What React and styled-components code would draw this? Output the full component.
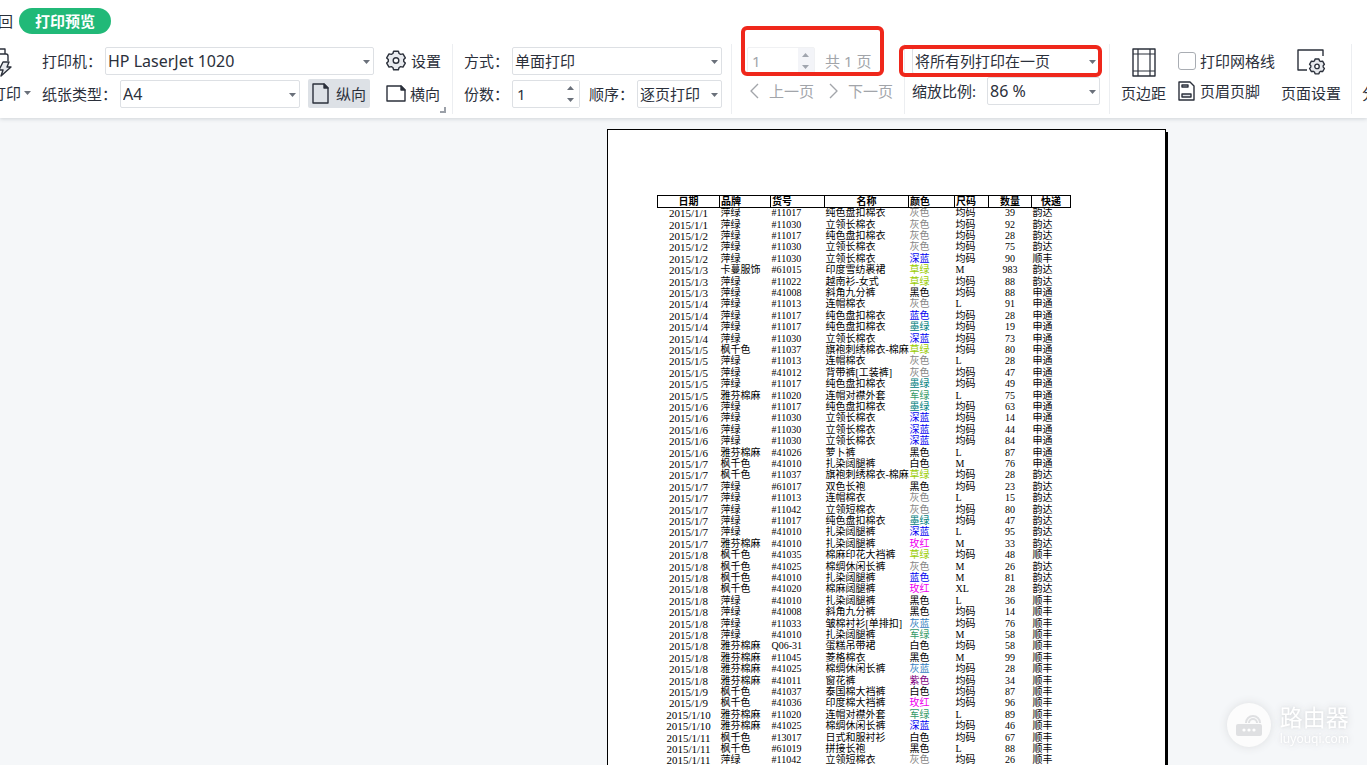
import React, { useState } from 'react';
import styled, { createGlobalStyle } from 'styled-components';

const GlobalStyle = createGlobalStyle`
  * {
    box-sizing: border-box;
  }

  body {
    margin: 0;
    overflow: hidden;
    background: #f5f7f9;
    color: #2b303b;
    font-family: 'Noto Sans', 'Noto Sans CJK SC', sans-serif;
    font-size: 15px;
    line-height: 20px;
  }

  button, input, select {
    font: inherit;
    color: inherit;
  }
`;

const Screen = styled.div`
  display: flex;
  flex-direction: column;
  height: 100vh;
  overflow: hidden;
`;

const Header = styled.header`
  position: relative;
  flex: none;
  background: #fff;
  box-shadow: 0 1px 4px rgba(60, 70, 85, 0.2);
`;

const Tabs = styled.nav`
  display: flex;
  align-items: center;
  gap: 6px;
  height: 42px;
  margin-left: -17px;
`;

const BackButton = styled.button`
  padding: 0;
  border: 0;
  background: none;
`;

const ActiveTab = styled.button`
  height: 26px;
  padding: 0 16px;
  border: 0;
  border-radius: 13px;
  background: #21b978;
  color: #fff;
  font-weight: 700;
  line-height: 26px;
  white-space: nowrap;
`;

const Ribbon = styled.div`
  display: flex;
  height: 76px;
  padding: 2px 0 4px;
  margin-left: -9px;
  white-space: nowrap;
`;

const Group = styled.section`
  position: relative;
  display: flex;
  flex: none;
  gap: ${(props) => props.$gap || '0'};
  padding: ${(props) => props.$padding || '0 10px'};
  border-right: 1px solid #eceef1;
`;

const Rows = styled.div`
  display: flex;
  flex-direction: column;
  gap: ${(props) => props.$gap || '4px'};
  padding: ${(props) => props.$padding || '2px 0 0'};
`;

const Row = styled.div`
  position: relative;
  display: flex;
  align-items: center;
  gap: ${(props) => props.$gap || '0'};
  height: 29px;
`;

const Label = styled.label`
  flex: none;
  width: ${(props) => props.$width || 'auto'};
`;

const PageTotal = styled.span`
  color: #a2a5aa;
`;

const Field = styled.span`
  position: relative;
  display: block;
  width: ${(props) => props.$width};
  height: ${(props) => props.$height || '28px'};
  margin-right: ${(props) => props.$after || '0'};
  font-size: ${(props) => props.$size || '15px'};

  select, input {
    display: block;
    width: 100%;
    height: 100%;
    margin: 0;
    padding: 0 2px;
    border: 1px solid #dde0e4;
    border-radius: 2px;
    background: #fff;
    appearance: none;
    outline: none;
  }

  input {
    padding: 0 4px;
  }

  input:disabled {
    border-color: #f0f1f3;
    color: #a2a5aa;
    opacity: 1;
  }
`;

const CaretSvg = styled.svg`
  position: absolute;
  top: 50%;
  right: 4px;
  margin-top: -1px;
  fill: #6a707a;
  pointer-events: none;
`;

const Spinner = styled.span`
  position: absolute;
  top: 1px;
  right: 1px;
  bottom: 1px;
  display: flex;
  flex-direction: column;
  justify-content: space-between;
  width: 16px;
  padding: 5px 4px;
  background: ${(props) => (props.$muted ? '#f3f4f8' : '#fff')};

  svg {
    fill: ${(props) => (props.$muted ? '#a0a5ae' : '#6a707a')};
  }
`;

const RedFrame = styled.span`
  position: absolute;
  inset: ${(props) => props.$inset};
  border: 4px solid #ef271b;
  border-radius: 6px;
  pointer-events: none;
`;

const ToolButton = styled.button`
  display: flex;
  align-items: center;
  gap: ${(props) => props.$gap || '5px'};
  height: 29px;
  padding: ${(props) => props.$padding || '0'};
  border: 0;
  border-radius: 2px;
  background: ${(props) => (props.$active ? '#dde1e6' : 'none')};

  &:disabled {
    color: #a2a5aa;
  }
`;

const TallButton = styled.button`
  display: flex;
  flex-direction: column;
  align-items: ${(props) => props.$align || 'center'};
  justify-content: space-between;
  height: 61px;
  padding: 4px 0 2px;
  border: 0;
  background: none;
`;

const PrintText = styled.span`
  display: flex;
  align-items: center;
  gap: 3px;
`;

const Checkbox = styled.input`
  width: 18px;
  height: 18px;
  margin: 0;
  border: 1px solid #a9adb3;
  border-radius: 3px;
  background: #fff;
  appearance: none;
`;

const Corner = styled.span`
  position: absolute;
  right: 6px;
  bottom: 1px;
  width: 6px;
  height: 6px;
  border: solid #9ba0a8;
  border-width: 0 2px 2px 0;
`;

const Workspace = styled.main`
  flex: 1;
  min-height: 0;
  padding: 11px 201px 0 0;
  overflow: hidden;
`;

const Paper = styled.article`
  width: 559px;
  min-height: 800px;
  margin-left: auto;
  padding: 65px 0 0 49px;
  border: 1px solid #000;
  background: #fff;
  box-shadow: 2px 3px 0 #000;
`;

const Sheet = styled.table`
  width: 413px;
  table-layout: fixed;
  border-collapse: collapse;
  color: #000;
  font-family: 'Liberation Serif', 'Noto Sans CJK SC', serif;
  font-size: 10px;
  line-height: 10px;

  th {
    height: 12px;
    padding: 0 1px;
    border: 1px solid #000;
    font-weight: 700;
  }

  td {
    height: 11px;
    padding: 0 1px;
    vertical-align: top;
    white-space: nowrap;
  }

  tr:nth-child(5n + 1) td,
  tr:nth-child(5n + 4) td {
    height: 12px;
  }
`;

const HeadCell = styled.th`
  text-align: ${(props) => props.$align};
`;

const Cell = styled.td`
  color: ${(props) => props.$color || '#000'};
  font-size: ${(props) => props.$size || '10px'};
  text-align: ${(props) => props.$align || 'left'};
`;

const Watermark = styled.aside`
  position: fixed;
  right: 18px;
  bottom: 18px;
  display: flex;
  align-items: center;
  gap: 9px;
  color: #fff;
  text-shadow: 0 0 8px #d3d5d8, 0 0 3px #dcdee0;
`;

const Badge = styled.span`
  display: grid;
  place-items: center;
  width: 44px;
  height: 44px;
  border-radius: 50%;
  background: #fcfcfc;
  box-shadow: 0 0 10px #dcdee0;
`;

const BrandName = styled.div`
  font-size: 23px;
  line-height: 28px;
`;

const BrandUrl = styled.div`
  font-size: 12px;
  line-height: 16px;
`;

const Caret = () => (
  <CaretSvg width="7" height="4" viewBox="0 0 7 4" aria-hidden="true">
    <path d="M0 0h7L3.5 4z" />
  </CaretSvg>
);

const Steps = ({ muted }) => (
  <Spinner $muted={muted} aria-hidden="true">
    <svg width="7" height="4" viewBox="0 0 7 4"><path d="M0 4h7L3.5 0z" /></svg>
    <svg width="7" height="4" viewBox="0 0 7 4"><path d="M0 0h7L3.5 4z" /></svg>
  </Spinner>
);

const Icon = ({ width, height, children }) => (
  <svg
    width={width}
    height={height}
    viewBox={`0 0 ${width} ${height}`}
    fill="none"
    stroke="currentColor"
    strokeWidth="1.4"
    strokeLinejoin="round"
    aria-hidden="true"
  >
    {children}
  </svg>
);

const GEAR =
  'M7.6 1.2h4.8l.7 2.3 1.6.9 2.3-.5 2.3 4-1.6 1.7v1.8l1.6 1.7-2.3 4-2.3-.5-1.6.9-.7 2.3H7.6l-.7-2.3-1.6-.9-2.3.5-2.3-4 1.6-1.7V9.6L.7 7.9l2.3-4 2.3.5 1.6-.9z';

const GearIcon = () => (
  <Icon width={20} height={21}>
    <path d={GEAR} fill="#e8eaee" />
    <circle cx="10" cy="10.5" r="2.8" fill="#fff" />
  </Icon>
);

const PrintIcon = () => (
  <Icon width={22} height={30}>
    <path d="M4 6V1h10v5M2 22V8q0-2 2-2h11q2 0 2 2v5" />
    <path d="M12 14h6l-2 5h4L10 28l2-6H8z" fill="#e8eaee" />
  </Icon>
);

const PortraitIcon = () => (
  <Icon width={17} height={21}>
    <path d="M1 1h11l4 4v15H1z" />
    <path d="M12 1v4h4z" fill="currentColor" />
  </Icon>
);

const LandscapeIcon = () => (
  <Icon width={20} height={17}>
    <path d="M1 1h14l4 4v11H1z" />
    <path d="M15 1v4h4z" fill="currentColor" />
  </Icon>
);

const MarginIcon = () => (
  <Icon width={24} height={29}>
    <path d="M1 1h22v27H1z" />
    <path d="M6 1v27M18 1v27M1 6h22M1 23h22" strokeWidth="1.2" />
  </Icon>
);

const HeaderFooterIcon = () => (
  <Icon width={17} height={20}>
    <path d="M1 1h11l4 4v14H1z" />
    <path d="M4 4h6v2H4zM4 13h9v3H4z" fill="#e0e3e8" />
  </Icon>
);

const PageSetupIcon = () => (
  <Icon width={30} height={27}>
    <path d="M11 22H2V2h25v6" />
    <g transform="translate(13 10) scale(.8)">
      <path d={GEAR} fill="#e8eaee" strokeWidth="1.7" />
      <circle cx="10" cy="10.5" r="2.8" fill="#fff" strokeWidth="1.7" />
    </g>
  </Icon>
);

const Arrow = ({ d }) => (
  <Icon width={9} height={16}>
    <path d={d} />
  </Icon>
);

const Select = ({ id, width, height, size, after, value, label }) => (
  <Field $width={width} $height={height} $size={size} $after={after}>
    <select id={id} defaultValue={value} aria-label={label}>
      <option>{value}</option>
    </select>
    <Caret />
  </Field>
);

const columns = [
  ['日期', 62, 'center'],
  ['品牌', 51, 'left'],
  ['货号', 54, 'left'],
  ['名称', 84, 'center'],
  ['颜色', 46, 'left'],
  ['尺码', 34, 'left'],
  ['数量', 43, 'center'],
  ['快递', 39, 'center'],
];

const colors = {
  灰色: '#858585',
  深蓝: '#0000f0',
  蓝色: '#0000f0',
  草绿: '#99cc00',
  墨绿: '#008080',
  军绿: '#339966',
  玫红: '#f000f0',
  灰蓝: '#3380c0',
  紫色: '#800080',
};

const orders = `
1/1 萍绿 #11017 纯色盘扣棉衣 灰色 均码 39 韵达
1/1 萍绿 #11030 立领长棉衣 灰色 均码 92 韵达
1/2 萍绿 #11017 纯色盘扣棉衣 灰色 均码 28 韵达
1/2 萍绿 #11030 立领长棉衣 灰色 均码 75 韵达
1/2 萍绿 #11030 立领长棉衣 深蓝 均码 90 顺丰
1/3 卡蔓服饰 #61015 印度雪纺裹裙 草绿 M 983 韵达
1/3 萍绿 #11022 越南衫-女式 草绿 均码 88 韵达
1/3 萍绿 #41008 斜角九分裤 黑色 均码 88 申通
1/4 萍绿 #11013 连帽棉衣 灰色 L 91 申通
1/4 萍绿 #11017 纯色盘扣棉衣 蓝色 均码 28 申通
1/4 萍绿 #11017 纯色盘扣棉衣 墨绿 均码 19 申通
1/4 萍绿 #11030 立领长棉衣 深蓝 均码 73 申通
1/5 枫千色 #11037 旗袍刺绣棉衣-棉麻 草绿 均码 80 申通
1/5 萍绿 #11013 连帽棉衣 灰色 L 28 申通
1/5 萍绿 #41012 背带裤[工装裤] 灰色 均码 47 申通
1/5 萍绿 #11017 纯色盘扣棉衣 墨绿 均码 49 申通
1/5 雅芬棉麻 #11020 连帽对襟外套 军绿 L 75 申通
1/6 萍绿 #11017 纯色盘扣棉衣 墨绿 均码 63 申通
1/6 萍绿 #11030 立领长棉衣 深蓝 均码 14 申通
1/6 萍绿 #11030 立领长棉衣 深蓝 均码 44 申通
1/6 萍绿 #11030 立领长棉衣 深蓝 均码 84 申通
1/6 雅芬棉麻 #41026 萝卜裤 黑色 L 87 申通
1/7 枫千色 #41010 扎染阔腿裤 白色 M 76 申通
1/7 枫千色 #11037 旗袍刺绣棉衣-棉麻 草绿 均码 28 韵达
1/7 萍绿 #61017 双色长袍 黑色 均码 23 韵达
1/7 萍绿 #11013 连帽棉衣 灰色 L 15 韵达
1/7 萍绿 #11042 立领短棉衣 灰色 均码 80 韵达
1/7 萍绿 #11017 纯色盘扣棉衣 墨绿 均码 47 韵达
1/7 萍绿 #41010 扎染阔腿裤 深蓝 L 95 韵达
1/7 雅芬棉麻 #41010 扎染阔腿裤 玫红 M 33 韵达
1/8 枫千色 #41035 棉麻印花大裆裤 草绿 均码 48 顺丰
1/8 枫千色 #41025 棉绸休闲长裤 灰色 M 26 韵达
1/8 枫千色 #41010 扎染阔腿裤 蓝色 M 81 韵达
1/8 枫千色 #41020 棉麻阔腿裤 玫红 XL 28 韵达
1/8 萍绿 #41010 扎染阔腿裤 黑色 L 36 顺丰
1/8 萍绿 #41008 斜角九分裤 黑色 均码 14 顺丰
1/8 萍绿 #11033 皱棉衬衫[单排扣] 灰蓝 均码 76 顺丰
1/8 萍绿 #41010 扎染阔腿裤 军绿 M 58 顺丰
1/8 雅芬棉麻 Q06-31 蛋糕吊带裙 白色 均码 58 顺丰
1/8 雅芬棉麻 #11045 菱格棉衣 黑色 M 99 顺丰
1/8 雅芬棉麻 #41025 棉绸休闲长裤 灰蓝 均码 28 顺丰
1/8 雅芬棉麻 #41011 窗花裤 紫色 均码 34 顺丰
1/9 枫千色 #41037 泰国棉大裆裤 白色 均码 87 顺丰
1/9 枫千色 #41036 印度棉大裆裤 玫红 均码 96 顺丰
1/10 雅芬棉麻 #11020 连帽对襟外套 军绿 L 89 顺丰
1/10 雅芬棉麻 #41025 棉绸休闲长裤 深蓝 均码 46 顺丰
1/11 枫千色 #13017 日式和服衬衫 白色 均码 67 顺丰
1/11 枫千色 #61019 拼接长袍 黑色 L 88 顺丰
1/11 萍绿 #11042 立领短棉衣 灰色 均码 26 顺丰
`
  .trim()
  .split('\n')
  .map((line) => line.split(' '));

const OrderTable = () => (
  <Sheet>
    <colgroup>
      {columns.map(([name, width]) => (
        <col key={name} width={width} />
      ))}
    </colgroup>
    <thead>
      <tr>
        {columns.map(([name, , align]) => (
          <HeadCell key={name} $align={align}>{name}</HeadCell>
        ))}
      </tr>
    </thead>
    <tbody>
      {orders.map(([day, brand, code, name, color, size, count, express], i) => (
        <tr key={i}>
          <Cell $align="center" $size="11px">2015/{day}</Cell>
          <Cell>{brand}</Cell>
          <Cell>{code}</Cell>
          <Cell>{name}</Cell>
          <Cell $color={colors[color]}>{color}</Cell>
          <Cell>{size}</Cell>
          <Cell $align="center">{count}</Cell>
          <Cell>{express}</Cell>
        </tr>
      ))}
    </tbody>
  </Sheet>
);

const App = () => {
  const [orientation, setOrientation] = useState('portrait');
  const [gridLines, setGridLines] = useState(false);

  return (
    <Screen>
      <GlobalStyle />
      <Header>
        <Tabs>
          <BackButton>返回</BackButton>
          <ActiveTab>打印预览</ActiveTab>
        </Tabs>

        <Ribbon>
          <Group $gap="11px" $padding="0 11px 0 0">
            <TallButton $align="flex-start">
              <PrintIcon />
              <PrintText>
                <span>打印</span>
                <svg width="7" height="4" viewBox="0 0 7 4" aria-hidden="true">
                  <path d="M0 0h7L3.5 4z" fill="#6a707a" />
                </svg>
              </PrintText>
            </TallButton>
            <Rows>
              <Row>
                <Label htmlFor="printer" $width="63px">打印机：</Label>
                <Select id="printer" width="269px" size="16px" after="12px" value="HP LaserJet 1020" />
                <ToolButton>
                  <GearIcon />
                  设置
                </ToolButton>
              </Row>
              <Row>
                <Label htmlFor="paper" $width="78px">纸张类型：</Label>
                <Select id="paper" width="180px" size="16px" after="8px" value="A4" />
                <ToolButton
                  $active={orientation === 'portrait'}
                  $padding="0 4px"
                  $gap="7px"
                  onClick={() => setOrientation('portrait')}
                >
                  <PortraitIcon />
                  纵向
                </ToolButton>
                <ToolButton
                  $active={orientation === 'landscape'}
                  $padding="0 0 0 16px"
                  $gap="4px"
                  onClick={() => setOrientation('landscape')}
                >
                  <LandscapeIcon />
                  横向
                </ToolButton>
              </Row>
            </Rows>
            <Corner />
          </Group>

          <Group $padding="0 9px 0 11px">
            <Rows>
              <Row>
                <Label htmlFor="sides" $width="48px">方式：</Label>
                <Select id="sides" width="210px" value="单面打印" />
              </Row>
              <Row>
                <Label htmlFor="copies" $width="48px">份数：</Label>
                <Field $width="68px" $after="9px">
                  <input id="copies" type="text" defaultValue="1" />
                  <Steps />
                </Field>
                <Label htmlFor="collate" $width="48px">顺序：</Label>
                <Select id="collate" width="85px" value="逐页打印" />
              </Row>
            </Rows>
          </Group>

          <Group $padding="0 11px 0 15px">
            <Rows $gap="1px">
              <Row $gap="10px">
                <Field $width="68px">
                  <input type="text" aria-label="页码" defaultValue="1" disabled />
                  <Steps muted />
                </Field>
                <PageTotal>共 1 页</PageTotal>
                <RedFrame $inset="-20px 9px -1px -6px" />
              </Row>
              <Row $gap="12px">
                <ToolButton disabled $gap="10px" $padding="0 0 0 3px">
                  <Arrow d="M8 1L1 8l7 7" />
                  上一页
                </ToolButton>
                <ToolButton disabled $gap="10px" $padding="0 0 0 3px">
                  <Arrow d="M1 1l7 7-7 7" />
                  下一页
                </ToolButton>
              </Row>
            </Rows>
          </Group>

          <Group $padding="0 9px 0 7px">
            <Rows $gap="1px">
              <Row>
                <Select label="缩放" width="188px" height="26px" value="将所有列打印在一页" />
                <RedFrame $inset="-1px -2px -2px -13px" />
              </Row>
              <Row>
                <Label htmlFor="scale" $width="75px">缩放比例:</Label>
                <Select id="scale" width="113px" size="16px" value="86 %" />
              </Row>
            </Rows>
          </Group>

          <Group $gap="6px" $padding="0 10px 0 11px">
            <TallButton>
              <MarginIcon />
              页边距
            </TallButton>
            <Rows $gap="1px" $padding="2px 0 0 6px">
              <Row $gap="4px">
                <Checkbox
                  id="grid"
                  type="checkbox"
                  checked={gridLines}
                  onChange={() => setGridLines(!gridLines)}
                />
                <Label htmlFor="grid">打印网格线</Label>
              </Row>
              <ToolButton>
                <HeaderFooterIcon />
                页眉页脚
              </ToolButton>
            </Rows>
            <TallButton>
              <PageSetupIcon />
              页面设置
            </TallButton>
          </Group>

          <Group $padding="0 10px">
            <TallButton>
              <Icon width={28} height={28}>
                <path d="M10 1h17v26H10zM10 14h17" />
              </Icon>
              分页预览
            </TallButton>
          </Group>
        </Ribbon>
      </Header>

      <Workspace>
        <Paper>
          <OrderTable />
        </Paper>
      </Workspace>

      <Watermark>
        <Badge>
          <svg width="28" height="26" viewBox="0 0 28 26" aria-hidden="true">
            <rect x="1" y="12" width="26" height="12" rx="2" fill="#dfe0e2" />
            <path
              d="M11 11a7 7 0 0 1 14 0M14 11a4 4 0 0 1 8 0"
              fill="none"
              stroke="#dfe0e2"
              strokeWidth="2"
            />
            <circle cx="9" cy="18" r="1.6" fill="#fff" />
            <circle cx="14" cy="18" r="1.6" fill="#fff" />
            <circle cx="19" cy="18" r="1.6" fill="#fff" />
          </svg>
        </Badge>
        <div>
          <BrandName>路由器</BrandName>
          <BrandUrl>luyouqi.com</BrandUrl>
        </div>
      </Watermark>
    </Screen>
  );
};

export default App;
